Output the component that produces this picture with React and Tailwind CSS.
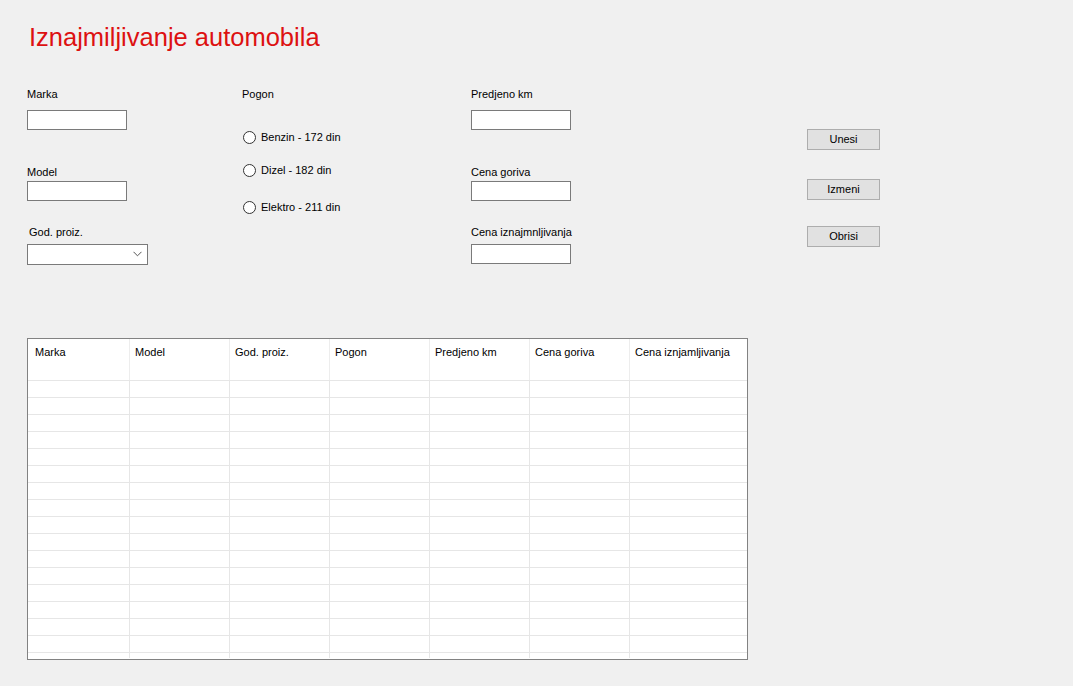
import React from "react";

const font = { fontFamily: '"Liberation Sans", Arial, sans-serif' };

function Label({ children, className = "" }) {
  return <div className={`text-[11px] leading-[13px] text-black whitespace-nowrap ${className}`}>{children}</div>;
}

function TextBox({ className = "" }) {
  return <div className={`w-[100px] h-[20px] bg-white border border-[#7a7a7a] ${className}`} />;
}

function Radio({ label, className = "" }) {
  return (
    <div className={`flex items-center h-[17px] ${className}`}>
      <div className="w-[13px] h-[13px] rounded-full border border-[#333333] bg-white ml-[1px]" />
      <span className="ml-[5px] text-[11px] leading-[13px] text-black whitespace-nowrap">{label}</span>
    </div>
  );
}

function Button({ children, className = "" }) {
  return (
    <div className={`w-[73px] h-[21px] bg-[#e1e1e1] border border-[#adadad] flex items-center justify-center text-[11px] text-black ${className}`}>
      {children}
    </div>
  );
}

const cols = ["Marka", "Model", "God. proiz.", "Pogon", "Predjeno km", "Cena goriva", "Cena iznjamljivanja"];
const gridCols = "grid grid-cols-[102px_100px_100px_100px_100px_100px_117px]";

export default function App() {
  return (
    <div className="w-full min-h-[686px] bg-[#f0f0f0] pl-[27px] pt-[25px]" style={font}>
      <div className="ml-[2px] text-[25.5px] leading-none text-[#dd1111] whitespace-nowrap">Iznajmiljivanje automobila</div>

      <div className="flex items-start mt-[37px]">
        {/* column 1 */}
        <div className="w-[215px] flex flex-col">
          <Label>Marka</Label>
          <TextBox className="mt-[9px]" />
          <Label className="mt-[36px]">Model</Label>
          <TextBox className="mt-[2px]" />
          <Label className="mt-[25px] ml-[2px]">God. proiz.</Label>
          <div className="mt-[5px] w-[121px] h-[21px] bg-white border border-[#7a7a7a] flex items-center justify-end pr-[5px]">
            <svg width="9" height="6" viewBox="0 0 9 6" fill="none">
              <path d="M0.5 0.8 L4.5 4.8 L8.5 0.8" stroke="#555555" strokeWidth="1" />
            </svg>
          </div>
        </div>

        {/* column 2 */}
        <div className="w-[229px] flex flex-col">
          <Label>Pogon</Label>
          <Radio className="mt-[28px]" label="Benzin - 172 din" />
          <Radio className="mt-[16px]" label="Dizel - 182 din" />
          <Radio className="mt-[20px]" label="Elektro - 211 din" />
        </div>

        {/* column 3 */}
        <div className="w-[336px] flex flex-col">
          <Label>Predjeno km</Label>
          <TextBox className="mt-[9px]" />
          <Label className="mt-[36px]">Cena goriva</Label>
          <TextBox className="mt-[2px]" />
          <Label className="mt-[25px]">Cena iznajmnljivanja</Label>
          <TextBox className="mt-[5px]" />
        </div>

        {/* column 4 */}
        <div className="flex flex-col">
          <Button className="mt-[41px]">Unesi</Button>
          <Button className="mt-[29px]">Izmeni</Button>
          <Button className="mt-[26px]">Obrisi</Button>
        </div>
      </div>

      {/* table */}
      <div className="mt-[73px] w-[721px] h-[322px] border border-[#828282] bg-white flex flex-col overflow-hidden">
        <div className={`${gridCols} h-[42px] border-b border-[#e6e6e6]`}>
          {cols.map((c, i) => (
            <div
              key={c}
              className={`${i === 0 ? "pl-[7px]" : "pl-[5px]"} pt-[7px] text-[11px] leading-[13px] text-black whitespace-nowrap ${i < 6 ? "border-r border-[#ededed]" : ""}`}
            >
              {c}
            </div>
          ))}
        </div>
        {Array.from({ length: 16 }).map((_, r) => (
          <div key={r} className={`${gridCols} h-[17px] border-b border-[#e6e6e6]`}>
            {cols.map((c, i) => (
              <div key={c} className={i < 6 ? "border-r border-[#e6e6e6]" : ""} />
            ))}
          </div>
        ))}
        <div className={`${gridCols} h-[5px]`}>
          {cols.map((c, i) => (
            <div key={c} className={i < 6 ? "border-r border-[#e6e6e6]" : ""} />
          ))}
        </div>
      </div>
    </div>
  );
}
